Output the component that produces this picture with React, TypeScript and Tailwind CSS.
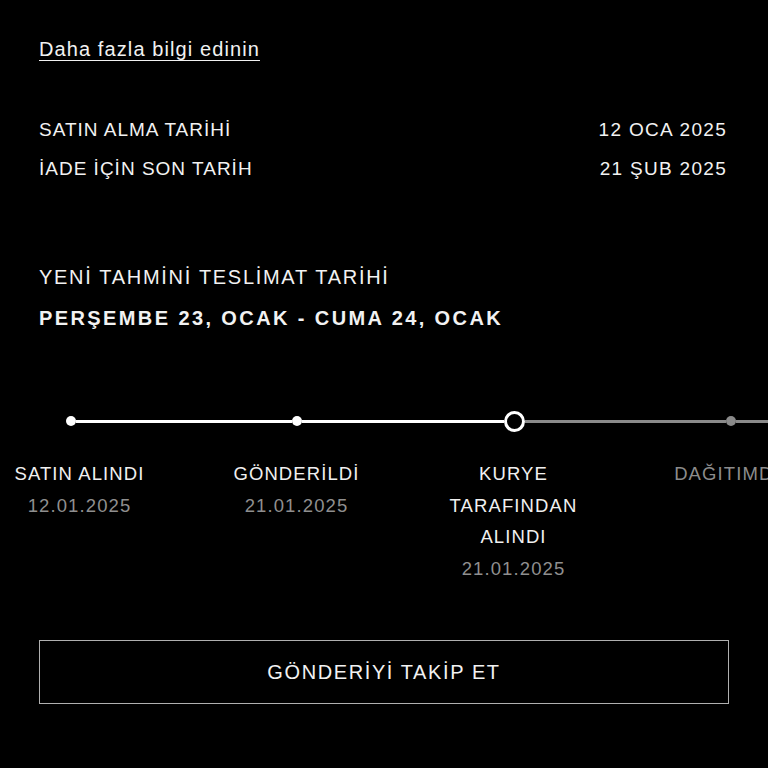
const steps = [
  { label: ['SATIN ALINDI'], date: '12.01.2025', done: true },
  { label: ['GÖNDERİLDİ'], date: '21.01.2025', done: true },
  { label: ['KURYE', 'TARAFINDAN', 'ALINDI'], date: '21.01.2025', done: true },
  { label: ['DAĞITIMDA'], date: '', done: false },
];

export default function App() {
  return (
    <div
      className="w-[768px] h-[768px] overflow-hidden bg-black text-[#f2f2f2]"
      style={{ fontFamily: '"Liberation Sans", Arial, sans-serif' }}
    >
      <div className="px-[39px] pt-[37px]">
        <a className="text-[20px] leading-[24px] tracking-[1.1px] underline underline-offset-[4px] decoration-1">
          Daha fazla bilgi edinin
        </a>

        <div className="mt-[55px] flex flex-col gap-[15px] text-[19px] leading-[24px] tracking-[1px]">
          <div className="flex justify-between">
            <span>SATIN ALMA TARİHİ</span>
            <span className="tracking-[1.3px] pr-[2px]">12 OCA 2025</span>
          </div>
          <div className="flex justify-between">
            <span>İADE İÇİN SON TARİH</span>
            <span className="tracking-[1.3px] pr-[2px]">21 ŞUB 2025</span>
          </div>
        </div>

        <div className="mt-[84px] text-[20px] leading-[24px] tracking-[1.7px]">
          YENİ TAHMİNİ TESLİMAT TARİHİ
        </div>
        <div className="mt-[17px] text-[20px] leading-[24px] font-bold tracking-[2.4px]">
          PERŞEMBE 23, OCAK - CUMA 24, OCAK
        </div>
      </div>

      {/* timeline track */}
      <div className="mt-[80px] flex items-center h-[22px] pl-[66px]">
        <div className="w-[10px] h-[10px] rounded-full bg-white shrink-0" />
        <div className="w-[216px] h-[3px] bg-white shrink-0" />
        <div className="w-[10px] h-[10px] rounded-full bg-white shrink-0" />
        <div className="w-[202px] h-[3px] bg-white shrink-0" />
        <div className="w-[21px] h-[21px] rounded-full border-[3px] border-white bg-black shrink-0" />
        <div className="w-[201px] h-[3px] bg-[#8a8a8a] shrink-0" />
        <div className="w-[10px] h-[10px] rounded-full bg-[#8a8a8a] shrink-0" />
        <div className="flex-1 h-[3px] bg-[#8a8a8a]" />
      </div>

      <div className="mt-[26px] flex ml-[-29px]">
        {steps.map((s, i) => (
          <div
            key={i}
            className="w-[217px] shrink-0 flex flex-col items-center text-center text-[18.5px] leading-[31.5px] tracking-[1.1px]"
          >
            {s.label.map((l) => (
              <span key={l} className={s.done ? 'text-[#f0f0f0] whitespace-nowrap' : 'text-[#8c8c8c] whitespace-nowrap'}>
                {l}
              </span>
            ))}
            {s.date && <span className="text-[#8f8f8f]">{s.date}</span>}
          </div>
        ))}
      </div>

      <div className="px-[39px] mt-[56px]">
        <button className="w-full h-[64px] border-[1.5px] border-[#b0b0b0] text-[20px] tracking-[1.6px] text-[#f2f2f2]">
          GÖNDERİYİ TAKİP ET
        </button>
      </div>
    </div>
  );
}
